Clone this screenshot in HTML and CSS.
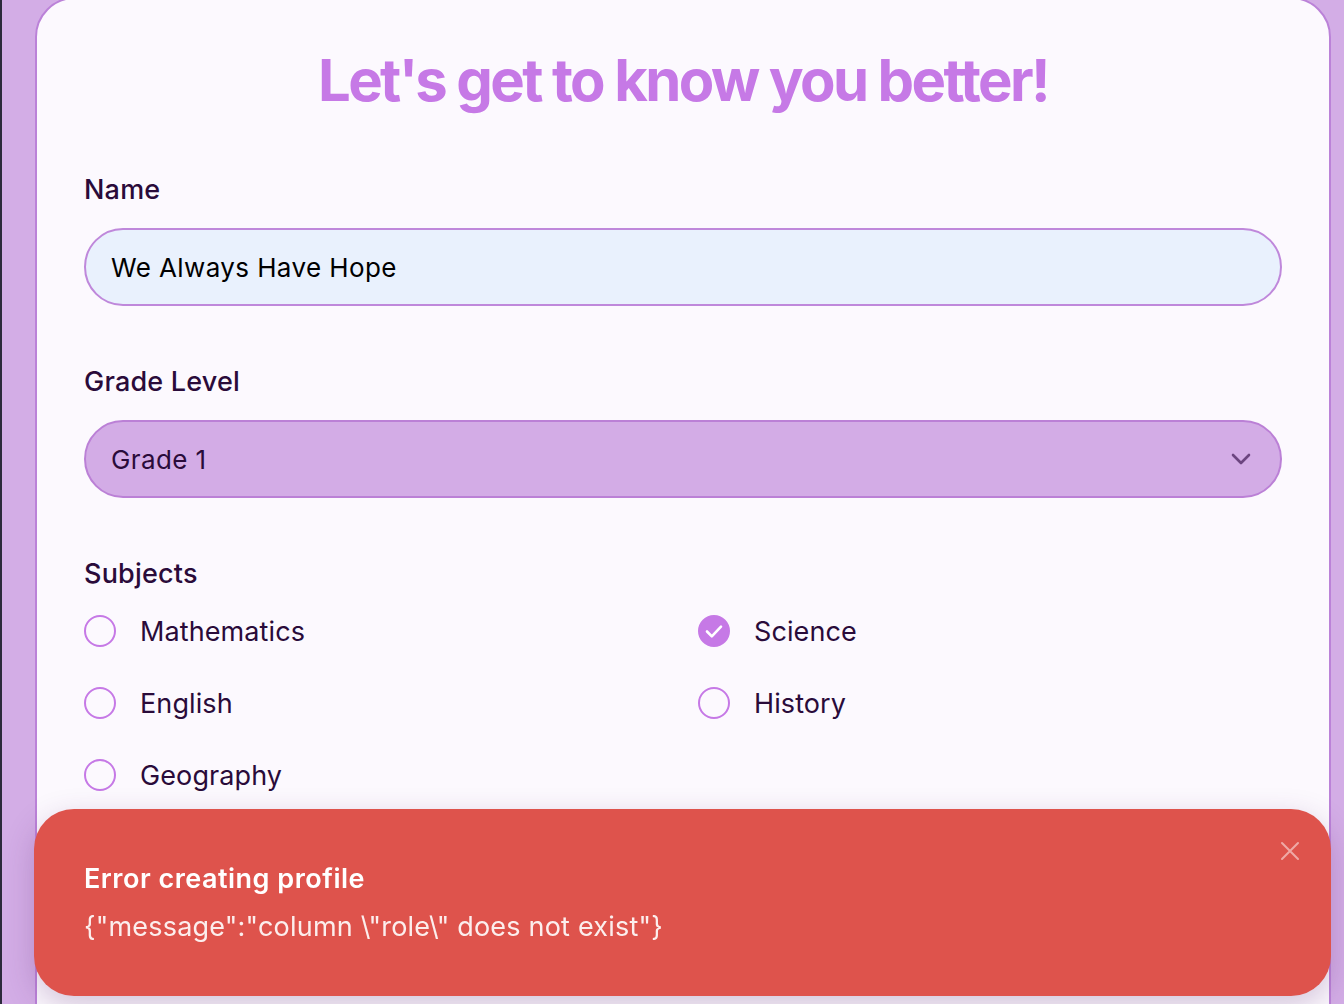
FILE: index.html
```html
<!DOCTYPE html>
<html lang="en">
<head>
<meta charset="utf-8">
<title>Profile</title>
<link rel="stylesheet" href="styles.css">
</head>
<body>
<div class="page">
  <main class="card">
    <h1 class="title">Let's get to know you better!</h1>
    <form class="form">
      <div class="field">
        <label class="label" for="name">Name</label>
        <input class="input" id="name" type="text" value="We Always Have Hope">
      </div>
      <div class="field">
        <label class="label" for="grade">Grade Level</label>
        <div class="select">
          <span class="select-value">Grade 1</span>
          <svg class="chevron" width="22" height="14" viewBox="0 0 22 14" fill="none"><path d="M3 3l8 8 8-8" stroke="currentColor" stroke-width="2.6" stroke-linecap="round" stroke-linejoin="round"/></svg>
        </div>
      </div>
      <div class="field">
        <span class="label">Subjects</span>
        <div class="subjects">
          <div class="option"><span class="box"></span><span class="opt-label">Mathematics</span></div>
          <div class="option"><span class="box checked"><svg width="32" height="32" viewBox="0 0 32 32" fill="none"><path d="M9 16.5l4.8 4.8 9.2-9.6" stroke="#fff" stroke-width="2.6" stroke-linecap="round" stroke-linejoin="round"/></svg></span><span class="opt-label">Science</span></div>
          <div class="option"><span class="box"></span><span class="opt-label">English</span></div>
          <div class="option"><span class="box"></span><span class="opt-label">History</span></div>
          <div class="option"><span class="box"></span><span class="opt-label">Geography</span></div>
        </div>
      </div>
    </form>
  </main>
</div>
<div class="toast">
  <div class="toast-title">Error creating profile</div>
  <div class="toast-msg">{"message":"column \"role\" does not exist"}</div>
  <svg class="toast-close" width="20" height="20" viewBox="0 0 20 20" fill="none"><path d="M2 2l16 16M18 2L2 18" stroke="currentColor" stroke-width="2" stroke-linecap="round"/></svg>
</div>
</body>
</html>
```
FILE: styles.css
```css
html, body {
  margin: 0;
  padding: 0;
}
body {
  background: #d3ade6;
  font-family: Inter, "Noto Sans", sans-serif;
  border-left: 2px solid #2c2a3c;
  height: 1004px;
  overflow: hidden;
  box-sizing: border-box;
}
.page {
  padding-left: 33px;
  padding-right: 13px;
}
.card {
  margin-top: -3px;
  background: #fcf9fe;
  border: 2px solid #bb82d8;
  border-radius: 40px;
  padding: 46px 47px 200px;
  min-height: 1100px;
  box-sizing: border-box;
}
.title {
  margin: 0;
  text-align: center;
  font-size: 58px;
  line-height: 70px;
  font-weight: 700;
  letter-spacing: -0.045em;
  color: #c679e6;
}
.form {
  margin-top: 55px;
  display: flex;
  flex-direction: column;
  gap: 56px;
}
.field {
  display: flex;
  flex-direction: column;
}
.label {
  font-size: 27px;
  line-height: 40px;
  font-weight: 500;
  letter-spacing: 0.2px;
  color: #2a0b3a;
  margin-bottom: 18px;
}
.input {
  height: 78px;
  box-sizing: border-box;
  border: 2px solid #bf88db;
  border-radius: 40px;
  background: #e9f1fd;
  padding: 0 25px;
  font-family: Inter, sans-serif;
  font-size: 26px;
  letter-spacing: 0.4px;
  color: #000;
  outline: none;
}
.select {
  height: 78px;
  box-sizing: border-box;
  border: 2px solid #bb80d6;
  border-radius: 40px;
  background: #d3ace6;
  padding: 0 28px 0 25px;
  display: flex;
  align-items: center;
  justify-content: space-between;
}
.select-value {
  font-size: 26px;
  letter-spacing: 0.4px;
  color: #2a0b3a;
}
.chevron {
  color: #6c4580;
}
.subjects {
  margin-top: -5px;
  display: grid;
  grid-template-columns: 1fr 1fr;
  column-gap: 30px;
  row-gap: 24px;
}
.option {
  display: flex;
  align-items: center;
  height: 48px;
}
.box {
  width: 32px;
  height: 32px;
  box-sizing: border-box;
  border: 2px solid #c679e6;
  border-radius: 50%;
  margin-right: 24px;
  display: flex;
  flex-shrink: 0;
}
.box.checked {
  background: #c679e6;
  border-color: #c679e6;
}
.box.checked svg {
  margin: -2px;
}
.opt-label {
  font-size: 27px;
  letter-spacing: 0.1px;
  color: #2a0b3a;
}
.toast {
  position: fixed;
  left: 34px;
  right: 13px;
  top: 809px;
  bottom: 8px;
  background: #de534c;
  border-radius: 40px;
  box-shadow: 0 10px 30px rgba(90, 40, 110, 0.25);
  padding: 52px 50px 0;
  color: #fff;
}
.toast-title {
  font-size: 27px;
  line-height: 36px;
  font-weight: 600;
  letter-spacing: 0.5px;
}
.toast-msg {
  margin-top: 12px;
  font-size: 27px;
  line-height: 36px;
  letter-spacing: 0.2px;
  color: rgba(255, 255, 255, 0.9);
}
.toast-close {
  position: absolute;
  top: 32px;
  right: 31px;
  color: rgba(255, 255, 255, 0.5);
}
```
